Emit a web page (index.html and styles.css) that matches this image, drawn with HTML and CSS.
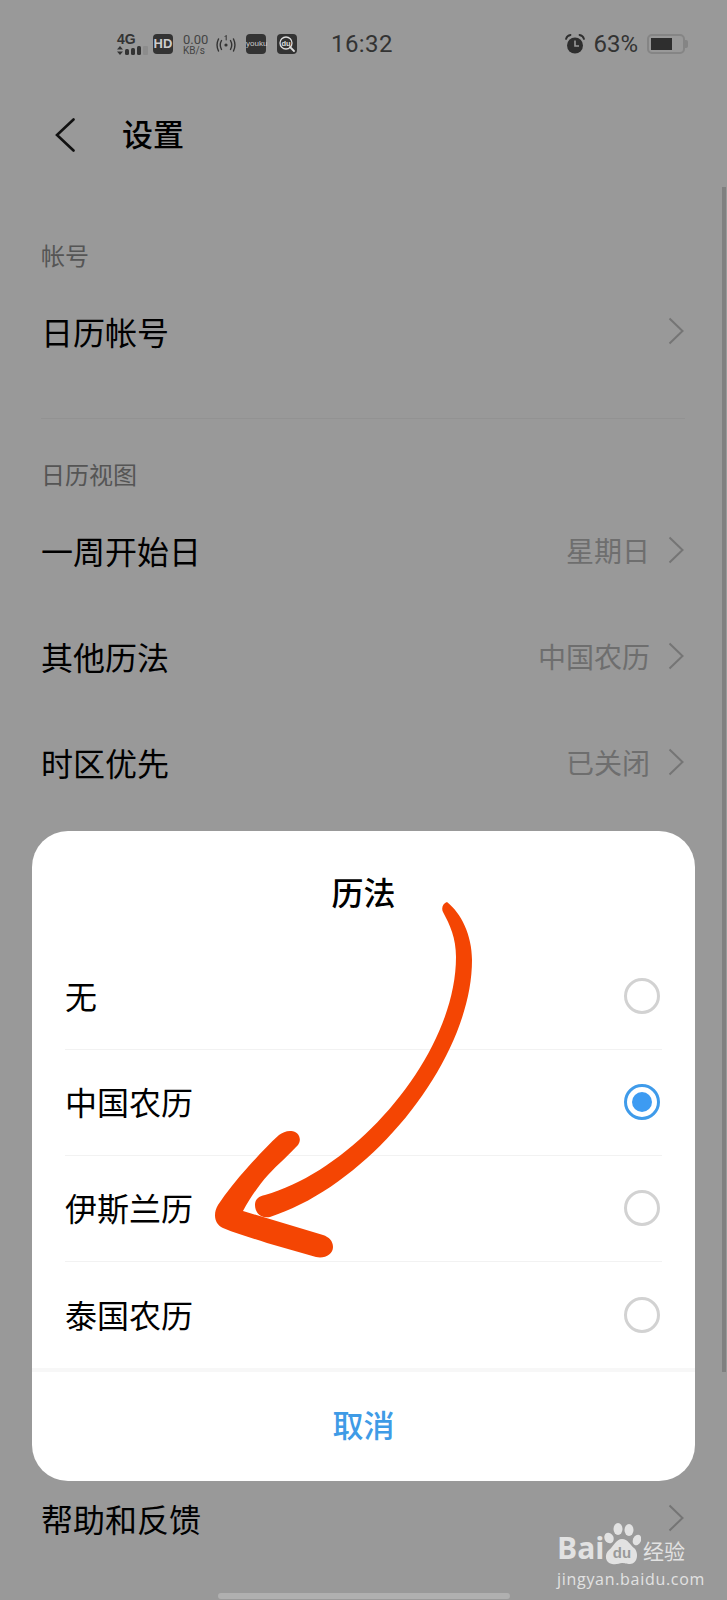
FILE: index.html
```html
<!DOCTYPE html>
<html lang="zh">
<head>
    <meta charset="UTF-8">
    <title>设置</title>
    <link rel="stylesheet" href="styles.css">
</head>
<body>
<div id="page">
    <div class="status">
        <div class="net">
            <span class="net-type">4G</span>
            <svg class="net-bars" width="33" height="9" viewBox="0 0 33 9">
                <path d="M0 3.6 L3 0 L6 3.6Z M0 5.4 L6 5.4 L3 9Z" fill="#333"/>
                <rect x="8" y="3" width="4" height="6" rx="1.5" fill="#333"/>
                <rect x="14" y="2" width="4" height="7" rx="1.5" fill="#333"/>
                <rect x="20" y="0" width="4" height="9" rx="1.5" fill="#333"/>
                <rect x="26" y="0" width="5" height="9" rx="1" fill="#8c8c8c"/>
            </svg>
        </div>
        <span class="badge hd">HD</span>
        <div class="speed"><span>0.00</span><span class="speed-unit">KB/s</span></div>
        <svg class="hotspot" width="20" height="20" viewBox="0 0 20 20" fill="none" stroke="#333" stroke-width="1.4" stroke-linecap="round">
            <circle cx="10" cy="11" r="1.6" fill="#333" stroke="none"/>
            <path d="M5.5 6.5 Q3 11 5.5 15.5 M2.5 5 Q-0.4 11 2.5 17 M14.5 6.5 Q17 11 14.5 15.5 M17.5 5 Q20.4 11 17.5 17"/>
            <path d="M9 2.6 L10.2 1.4 L10.2 6" stroke-width="1"/>
        </svg>
        <span class="badge youku">youku</span>
        <svg class="du" width="20" height="20" viewBox="0 0 20 20">
            <rect width="20" height="20" rx="4" fill="#333"/>
            <circle cx="9" cy="9" r="6" fill="none" stroke="#ddd" stroke-width="1.3"/>
            <path d="M13 13 L17 17" stroke="#ddd" stroke-width="1.8" stroke-linecap="round"/>
            <text x="9" y="11.5" text-anchor="middle" font-size="7.5" font-weight="700" font-family="Liberation Sans" fill="#ddd">du</text>
        </svg>
        <span class="clock">16:32</span>
        <svg class="alarm" width="20" height="20" viewBox="0 0 20 20">
            <circle cx="10" cy="11.5" r="8" fill="#2e2e2e"/>
            <path d="M1 5 Q2 1.5 5.5 1 M19 5 Q18 1.5 14.5 1" fill="none" stroke="#2e2e2e" stroke-width="1.8" stroke-linecap="round"/>
            <path d="M10 6.5 V12 H14" fill="none" stroke="#999" stroke-width="1.6"/>
        </svg>
        <span class="percent">63%</span>
        <div class="battery"><div class="battery-fill"></div></div>
    </div>

    <div class="header">
        <svg class="back" width="20" height="34" viewBox="0 0 20 34" fill="none" stroke="#111" stroke-width="2.6" stroke-linecap="round">
            <path d="M18.5 1.5 L2 17 L18.5 32.5"/>
        </svg>
        <span class="header-title">设置</span>
    </div>

    <div class="section-label first">帐号</div>
    <div class="row">
        <span class="row-name">日历帐号</span>
        <svg class="chev" width="16" height="28" viewBox="0 0 16 28"><path d="M1.5 1.5 L14.5 14 L1.5 26.5"/></svg>
    </div>
    <div class="line"></div>

    <div class="section-label">日历视图</div>
    <div class="row">
        <span class="row-name">一周开始日</span>
        <span class="row-value">星期日</span>
        <svg class="chev" width="16" height="28" viewBox="0 0 16 28"><path d="M1.5 1.5 L14.5 14 L1.5 26.5"/></svg>
    </div>
    <div class="row">
        <span class="row-name">其他历法</span>
        <span class="row-value">中国农历</span>
        <svg class="chev" width="16" height="28" viewBox="0 0 16 28"><path d="M1.5 1.5 L14.5 14 L1.5 26.5"/></svg>
    </div>
    <div class="row">
        <span class="row-name">时区优先</span>
        <span class="row-value">已关闭</span>
        <svg class="chev" width="16" height="28" viewBox="0 0 16 28"><path d="M1.5 1.5 L14.5 14 L1.5 26.5"/></svg>
    </div>
    <div class="row help">
        <span class="row-name">帮助和反馈</span>
        <svg class="chev" width="16" height="28" viewBox="0 0 16 28"><path d="M1.5 1.5 L14.5 14 L1.5 26.5"/></svg>
    </div>

    <div class="scrollbar"></div>

    <div class="dialog">
        <div class="dialog-title">历法</div>
        <ul class="options">
            <li><span>无</span><i class="radio"></i></li>
            <li><span>中国农历</span><i class="radio on"></i></li>
            <li><span>伊斯兰历</span><i class="radio"></i></li>
            <li><span>泰国农历</span><i class="radio"></i></li>
        </ul>
        <div class="cancel">取消</div>
    </div>

    <svg class="mark" width="727" height="1600" viewBox="0 0 727 1600" fill="#f44503">
        <path d="M447 902 C461 913 472 935 472 960 C472 1060 370 1185 270 1217 C260 1219 255 1212 255 1205 C255 1199 259 1196 265 1195 C355 1170 456 1055 456 957 C456 938 450 925 443 912 C441 908 443 903 447 902Z"/>
        <path d="M279 1135 C268 1145 258 1156 248 1167 C236 1180 226 1193 218 1205 C213 1213 214 1224 223 1228 C237 1234 252 1238 267 1243 L316 1257 C325 1259 333 1254 333 1247 C333 1241 329 1237 323 1235 L243 1211 C250 1198 259 1185 268 1175 C278 1164 289 1155 298 1145 C303 1138 297 1130 290 1131 C286 1131 282 1133 279 1135Z"/>
    </svg>

    <div class="wm">
        <div class="wm-top">
            <span class="wm-bai">Bai</span>
            <svg class="wm-paw" width="38" height="44" viewBox="0 0 38 44" fill="#e2e2e2">
                <ellipse cx="6" cy="16" rx="4.5" ry="5.5" transform="rotate(-25 6 16)"/>
                <ellipse cx="15" cy="7" rx="4.5" ry="6"/>
                <ellipse cx="26" cy="8" rx="4.5" ry="6"/>
                <ellipse cx="34" cy="18" rx="4" ry="5.5" transform="rotate(25 34 18)"/>
                <path d="M19 17 C25 17 27 23 31 26 C36 30 35 42 27 42 C23 42 22 41 19 41 C16 41 14 43 9 42 C2 41 1 32 6 28 C11 24 13 17 19 17Z"/>
                <text x="19" y="36" text-anchor="middle" font-size="15" font-weight="700" font-family="Liberation Sans" fill="#999">du</text>
            </svg>
            <span class="wm-jy">经验</span>
        </div>
        <div class="wm-url">jingyan.baidu.com</div>
    </div>

    <div class="home-bar"></div>
</div>
</body>
</html>
```

FILE: styles.css
```css
*{
    margin:0;
    padding:0;
    box-sizing:border-box;
}
ul{
    list-style:none;
}
body{
    font-family:"Liberation Sans","Noto Sans CJK SC",sans-serif;
    background-color:#999;
}
#page{
    position:relative;
    width:727px;
    height:1600px;
    overflow:hidden;
    background-color:#999;
    color:#000;
}

/* status bar */
.status{
    height:88px;
    padding:33px 42px 0 117px;
    display:flex;
    align-items:flex-start;
    color:#333;
}
.net{
    width:33px;
    margin-right:3px;
}
.net-type{
    display:block;
    font-size:14px;
    line-height:13px;
    font-weight:700;
}
.net-bars{
    display:block;
}
.badge{
    width:20px;
    height:20px;
    margin-top:1px;
    border-radius:4px;
    background-color:#333;
    color:#ccc;
    text-align:center;
    line-height:20px;
    flex-shrink:0;
}
.hd{
    font-size:13px;
    font-weight:700;
}
.speed{
    width:27px;
    margin:0 6px 0 10px;
    padding-top:1px;
    font-size:13px;
    line-height:12px;
    display:flex;
    flex-direction:column;
    color:#444;
    font-family:"Roboto",sans-serif;
}
.speed-unit{
    font-size:10px;
    line-height:10px;
}
.hotspot{
    flex-shrink:0;
    margin-top:1px;
}
.youku{
    margin-left:10px;
    font-size:8px;
}
.du{
    margin-top:1px;
    margin-left:11px;
    flex-shrink:0;
}
.clock{
    margin-left:34px;
    margin-top:1px;
    font-family:"Roboto",sans-serif;
    font-size:24px;
    line-height:20px;
    letter-spacing:.4px;
    color:#333;
}
.alarm{
    margin-left:auto;
    margin-top:1px;
}
.percent{
    margin-left:8px;
    margin-top:1px;
    font-family:"Roboto",sans-serif;
    font-size:24px;
    line-height:20px;
}
.battery{
    position:relative;
    width:38px;
    height:20px;
    margin-left:9px;
    margin-top:1px;
    border:2px solid #858585;
    border-radius:5px;
    padding:2px;
}
.battery:after{
    content:"";
    position:absolute;
    right:-5px;
    top:4px;
    width:3px;
    height:8px;
    background-color:#858585;
    border-radius:0 2px 2px 0;
}
.battery-fill{
    width:21px;
    height:100%;
    background-color:#2e2e2e;
}

/* title */
.header{
    height:94px;
    display:flex;
    align-items:center;
    padding-left:55px;
}
.back{
    margin-right:47px;
}
.header-title{
    font-size:31px;
    font-weight:500;
    padding-bottom:6px;
}

/* settings list */
.section-label{
    height:46px;
    margin-top:33px;
    padding-left:41px;
    font-size:24px;
    line-height:46px;
    color:#555;
}
.section-label.first{
    margin-top:52px;
}
.row{
    height:106px;
    padding:0 43px 4px 41px;
    display:flex;
    align-items:center;
}
.row-name{
    flex:1;
    font-size:32px;
    color:#000;
}
.row-value{
    margin-right:18px;
    font-size:28px;
    color:#6e6e6e;
}
.chev{
    fill:none;
    stroke:#757575;
    stroke-width:2;
    flex-shrink:0;
}
.line{
    height:1px;
    margin:32px 42px 0 41px;
    background-color:#929292;
}
.line + .section-label{
    margin-top:34px;
}
.help{
    margin-top:650px;
}
.scrollbar{
    position:absolute;
    left:722px;
    top:187px;
    width:4px;
    height:1185px;
    background-color:#808080;
}

/* dialog */
.dialog{
    position:absolute;
    left:32px;
    top:831px;
    width:663px;
    height:650px;
    background-color:#fff;
    border-radius:36px;
}
.dialog-title{
    height:113px;
    padding-top:40px;
    text-align:center;
    font-size:32px;
    line-height:46px;
    font-weight:500;
    color:#000;
}
.options{
    padding:0 33px 0 33px;
}
.options li{
    height:106px;
    padding-bottom:3px;
    display:flex;
    align-items:center;
    justify-content:space-between;
    font-size:32px;
    color:#000;
    border-bottom:1px solid #f2f2f2;
}
.options li:last-child{
    border-bottom:0;
}
.radio{
    width:36px;
    height:36px;
    margin:2px 2px 0 0;
    border:3px solid #d2d2d2;
    border-radius:50%;
    display:block;
}
.radio.on{
    border-color:#3f9bea;
    padding:5px;
}
.radio.on:before{
    content:"";
    display:block;
    width:100%;
    height:100%;
    border-radius:50%;
    background-color:#3d9bf2;
}
.cancel{
    height:112px;
    border-top:4px solid #f7f7f7;
    text-align:center;
    font-size:31px;
    font-weight:500;
    line-height:110px;
    color:#3f9be6;
}

/* painted over the screenshot */
.mark{
    position:absolute;
    left:0;
    top:0;
}
.wm{
    position:absolute;
    left:557px;
    top:1522px;
    width:134px;
    color:#e2e2e2;
}
.wm-top{
    display:flex;
    align-items:flex-end;
    height:44px;
}
.wm-bai{
    font-family:"Open Sans",sans-serif;
    font-size:30px;
    font-weight:700;
    line-height:36px;
    width:46px;
}
.wm-paw{
    flex-shrink:0;
}
.wm-jy{
    margin-left:2px;
    font-size:21px;
    line-height:28px;
    white-space:nowrap;
}
.wm-url{
    margin-top:3px;
    font-family:"Open Sans",sans-serif;
    font-size:16px;
    line-height:20px;
    letter-spacing:.7px;
    white-space:nowrap;
}
.home-bar{
    position:absolute;
    left:218px;
    top:1593px;
    width:292px;
    height:6px;
    border-radius:3px;
    background-color:#b0b0b0;
}
```
